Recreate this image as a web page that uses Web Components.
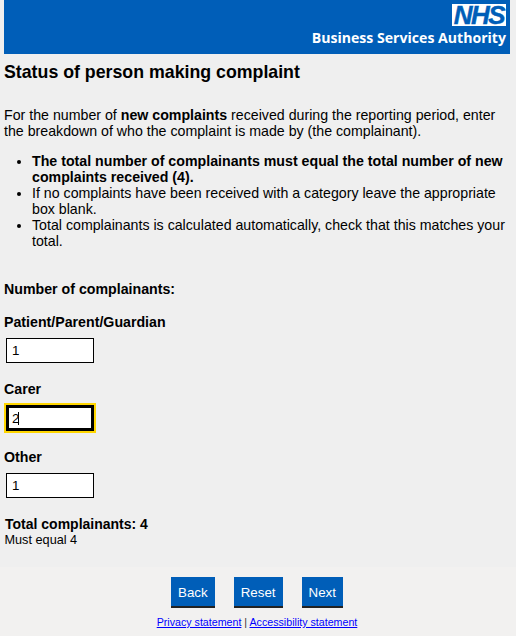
<!DOCTYPE html>
<html lang="en">
<head>
<meta charset="utf-8">
<title>Status of person making complaint</title>
<style>
  html, body { margin: 0; padding: 0; background: #efefef; }
  body { font-family: "Liberation Sans", Arial, sans-serif; font-size: 14.2px; color: #000; }
</style>
</head>
<body>

<nhs-header></nhs-header>
<complaint-page>
  <h-title slot="title">Status of person making complaint</h-title>
</complaint-page>
<page-footer></page-footer>

<script>
class NhsHeader extends HTMLElement {
  constructor() {
    super();
    this.shadowDOM = this.attachShadow({mode: 'open'});
  }
  connectedCallback() {
    this.shadowDOM.innerHTML = `
    <style>
      :host { display: block; margin: 0 6px 0 4px; }
      .bar {
        background: #005eb8;
        height: 54px;
        box-sizing: border-box;
        padding: 4px 4px 0 0;
        display: flex;
        flex-direction: column;
        align-items: flex-end;
      }
      .logo {
        width: 54px;
        height: 22px;
        background: #fff;
        color: #005eb8;
        font: italic bold 26px/23px "Liberation Sans", Arial, sans-serif;
        letter-spacing: -1.5px;
        -webkit-text-stroke: 0.4px #005eb8;
        text-align: center;
      }
      .name {
        color: #fff;
        font: bold 14.1px/17px "Open Sans", "Noto Sans", sans-serif;
        margin-top: 3px;
        white-space: nowrap;
      }
    </style>
    <div class="bar">
      <div class="logo">NHS</div>
      <div class="name">Business Services Authority</div>
    </div>`;
  }
}
customElements.define('nhs-header', NhsHeader);

class HTitle extends HTMLElement {
  constructor() {
    super();
    this.attachShadow({mode: 'open'}).innerHTML = `
    <style>
      :host { display: block; font-size: 17.75px; font-weight: bold; line-height: 21px; }
    </style>
    <slot></slot>`;
  }
}
customElements.define('h-title', HTitle);

class CountField extends HTMLElement {
  constructor() {
    super();
    this.shadowDOM = this.attachShadow({mode: 'open'});
  }
  connectedCallback() {
    const focused = this.hasAttribute('focused');
    this.shadowDOM.innerHTML = `
    <style>
      :host { display: block; }
      label { display: block; font-weight: bold; line-height: 16px; margin-bottom: 8px; }
      .box { position: relative; width: 88px; height: 25px; margin-left: 2px; }
      input {
        display: block;
        width: 88px;
        height: 25px;
        box-sizing: border-box;
        border: 1px solid #000;
        border-radius: 0;
        background: #fff;
        padding: 0 5px;
        margin: 0;
        font: 13.33px "Liberation Sans", Arial, sans-serif;
        color: #000;
        outline: none;
      }
      .focused { height: 26px; box-shadow: 0 0 0 2px #ffd600; }
      .focused input { height: 26px; border: 3px solid #000; padding: 0 3px; caret-color: transparent; }
      .caret { position: absolute; left: 12px; top: 7px; width: 1px; height: 13px; background: #000; }
    </style>
    <label for="f">${this.getAttribute('label')}</label>
    <div class="box ${focused ? 'focused' : ''}">
      <input id="f" type="text" value="${this.getAttribute('value')}">
      ${focused ? '<span class="caret"></span>' : ''}
    </div>`;
  }
}
customElements.define('count-field', CountField);

class ComplaintPage extends HTMLElement {
  constructor() {
    super();
    this.shadowDOM = this.attachShadow({mode: 'open'});
  }
  connectedCallback() {
    this.shadowDOM.innerHTML = `
    <style>
      :host { display: block; height: 513px; box-sizing: border-box; padding: 8px 0 0 4px; line-height: 16px; }
      p { margin: 0; }
      .intro { margin-top: 24px; }
      ul { margin: 14px 6px 0 0; padding: 0 0 0 28px; }
      li { margin: 0; }
      .count { margin-top: 32px; font-weight: bold; }
      .fields { display: flex; flex-direction: column; gap: 18px; margin-top: 17px; }
      .total { margin: 18px 0 0 1px; font-weight: bold; font-size: 14px; }
      .must { font-size: 12.7px; margin-left: 0.5px; }
    </style>
    <slot name="title"></slot>
    <p class="intro">For the number of <b>new complaints</b> received during the reporting period, enter the breakdown of who the complaint is made by (the complainant).</p>
    <ul>
      <li><b>The total number of complainants must equal the total number of new complaints received (4).</b></li>
      <li>If no complaints have been received with a category leave the appropriate box blank.</li>
      <li>Total complainants is calculated automatically, check that this matches your total.</li>
    </ul>
    <p class="count">Number of complainants:</p>
    <div class="fields">
      <count-field label="Patient/Parent/Guardian" value="1"></count-field>
      <count-field label="Carer" value="2" focused></count-field>
      <count-field label="Other" value="1"></count-field>
    </div>
    <p class="total">Total complainants: 4</p>
    <p class="must">Must equal 4</p>`;
  }
}
customElements.define('complaint-page', ComplaintPage);

class NavButton extends HTMLElement {
  constructor() {
    super();
    this.attachShadow({mode: 'open'}).innerHTML = `
    <style>
      :host { display: block; }
      button {
        display: block;
        height: 31px;
        box-sizing: border-box;
        border: none;
        border-bottom: 2px solid #222;
        border-radius: 0;
        background: #005eb8;
        color: #fff;
        font: 13.33px "Liberation Sans", Arial, sans-serif;
        padding: 1px 7px 0;
        margin: 0;
      }
    </style>
    <button type="button"><slot></slot></button>`;
  }
}
customElements.define('nav-button', NavButton);

class PageFooter extends HTMLElement {
  constructor() {
    super();
    this.shadowDOM = this.attachShadow({mode: 'open'});
  }
  connectedCallback() {
    this.shadowDOM.innerHTML = `
    <style>
      :host { display: block; background: #f2f1f0; height: 69px; box-sizing: border-box; padding: 10px 2px 0 0; }
      .buttons { display: flex; justify-content: center; gap: 19px; }
      .links { text-align: center; font-size: 10.67px; line-height: 12px; margin-top: 8px; color: #333; }
      a { color: #00f; }
    </style>
    <div class="buttons">
      <nav-button>Back</nav-button>
      <nav-button>Reset</nav-button>
      <nav-button>Next</nav-button>
    </div>
    <div class="links"><a href="#">Privacy statement</a> | <a href="#">Accessibility statement</a></div>`;
  }
}
customElements.define('page-footer', PageFooter);
</script>
</body>
</html>
